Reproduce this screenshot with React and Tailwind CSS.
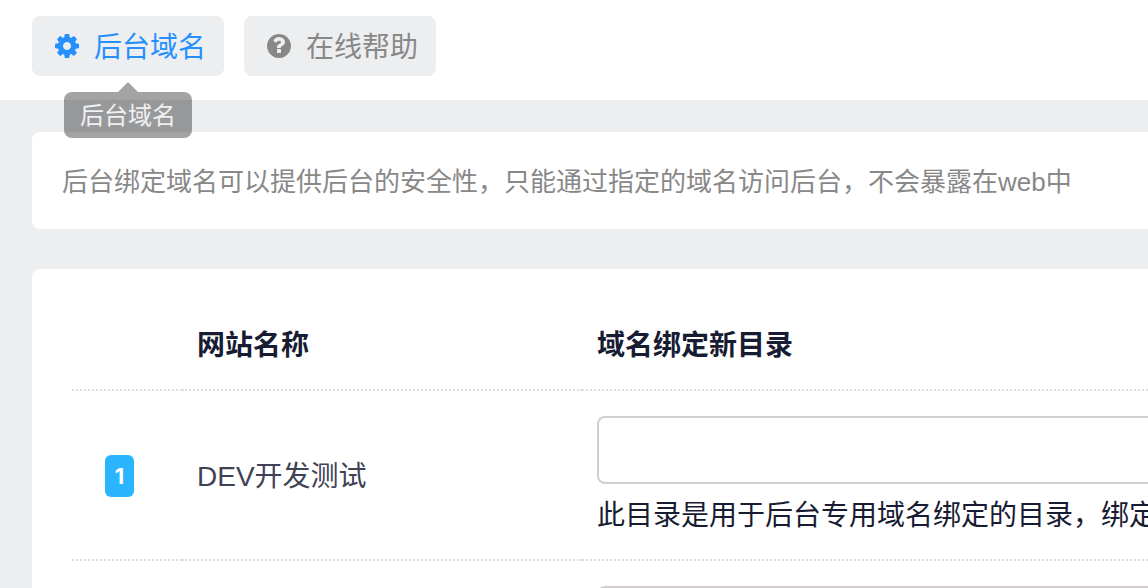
const COG =
  "M1024 640q0-106-75-181t-181-75-181 75-75 181 75 181 181 75 181-75 75-181zm512-109v222q0 12-8 23t-20 13l-185 28q-19 54-39 91 35 50 107 138 10 12 10 25t-9 23q-27 37-99 108t-94 71q-12 0-26-9l-138-108q-44 23-91 38-16 136-29 186-7 28-36 28h-222q-14 0-24.5-8.5t-11.5-21.5l-28-184q-49-16-90-37l-141 107q-10 9-25 9-14 0-25-11-126-114-165-168-7-10-7-23 0-12 8-23 15-21 51-66.5t54-70.5q-27-50-41-99l-183-27q-13-2-21-12.5t-8-23.5v-222q0-12 8-23t19-13l186-28q14-46 39-92-40-57-107-138-10-12-10-24 0-10 9-23 26-36 98.5-107.5t94.5-71.5q13 0 26 10l138 107q44-23 91-38 16-136 29-186 7-28 36-28h222q14 0 24.5 8.5t11.5 21.5l28 184q49 16 90 37l142-107q9-9 24-9 13 0 25 10 129 119 165 170 7 8 7 22 0 12-8 23-15 21-51 66.5t-54 70.5q26 50 41 98l183 28q13 2 21 12.5t8 23.5z";

const QUESTION =
  "M896 1056v-192q0-14-9-23t-23-9h-192q-14 0-23 9t-9 23v192q0 14 9 23t23 9h192q14 0 23-9t9-23zm256-672q0-88-55.5-163t-138.5-116-170-41q-243 0-371 213-15 24 8 42l132 100q7 6 19 6 16 0 25-12 53-68 86-92 34-24 86-24 48 0 85.5 26t37.5 59q0 38-20 61t-68 45q-63 28-115.5 86.5t-52.5 125.5v36q0 14 9 23t23 9h192q14 0 23-9t9-23q0-19 21.5-49.5t54.5-49.5q32-18 49-28.5t46-35 44.5-48 28-60.5 12.5-81zm384 256q0 209-103 385.5t-279.5 279.5-385.5 103-385.5-103-279.5-279.5-103-385.5 103-385.5 279.5-279.5 385.5-103 385.5 103 279.5 279.5 103 385.5z";

function Icon({ path }) {
  return (
    <svg viewBox="0 -128 1536 1536" className="size-6 shrink-0 fill-current" aria-hidden="true">
      <path d={path} />
    </svg>
  );
}

function ToolButton({ icon, label, className, describedBy }) {
  return (
    <button
      type="button"
      aria-describedby={describedBy}
      className={`flex h-[60px] items-center gap-[15px] rounded-lg bg-[#edeef0] pl-[23px] pr-[18px] text-[28px] leading-10 ${className}`}
    >
      <Icon path={icon} />
      <span className="pt-1">{label}</span>
    </button>
  );
}

function Tooltip({ id, children }) {
  return (
    <div
      id={id}
      role="tooltip"
      className="absolute left-1/2 top-full z-10 mt-[6px] flex -translate-x-1/2 flex-col items-center"
    >
      <svg viewBox="0 0 20 10" className="h-[10px] w-5 fill-black/36" aria-hidden="true">
        <path d="M0 10 L9 1 Q10 0 11 1 L20 10 Z" />
      </svg>
      <div className="whitespace-nowrap rounded-lg bg-black/36 px-4 pt-[2px] text-2xl leading-[44px] text-white/85">
        {children}
      </div>
    </div>
  );
}

function DirectoryInput(props) {
  return (
    <input
      type="text"
      className="block h-[68px] w-full rounded-l-lg border-2 border-r-0 border-[#d2cece] bg-white px-4 text-[28px] outline-none"
      {...props}
    />
  );
}

export default function App() {
  return (
    <div
      lang="zh-CN"
      className="flex h-screen flex-col overflow-hidden bg-[#edeef0] font-['Liberation_Sans','Noto_Sans_CJK_SC',sans-serif] text-[#181c32]"
    >
      <header className="flex gap-5 bg-white px-8 pb-6 pt-4">
        <div className="relative">
          <ToolButton icon={COG} label="后台域名" className="text-[#2690ff]" describedBy="domain-tip" />
          <Tooltip id="domain-tip">后台域名</Tooltip>
        </div>
        <ToolButton icon={QUESTION} label="在线帮助" className="text-[#888888]" />
      </header>

      <main className="flex flex-1 flex-col gap-10 pl-8 pt-8">
        <p className="overflow-hidden whitespace-nowrap rounded-l-lg bg-white px-[30px] pb-7 pt-8 text-[26px] leading-[37px] text-[#888888]">
          后台绑定域名可以提供后台的安全性，只能通过指定的域名访问后台，不会暴露在web中
        </p>

        <section className="flex-1 rounded-l-lg bg-white pl-10 pt-8">
          <table className="w-full table-fixed border-separate border-spacing-0 text-left text-[28px] leading-10">
            <colgroup>
              <col className="w-[110px]" />
              <col className="w-[400px]" />
              <col />
            </colgroup>
            <thead>
              <tr>
                <td className="border-b-2 border-dotted border-[#dfdfdf]" />
                <th scope="col" className="border-b-2 border-dotted border-[#dfdfdf] pb-[23px] pl-[15px] pt-[25px] font-bold">
                  网站名称
                </th>
                <th
                  scope="col"
                  id="dir-heading"
                  className="border-b-2 border-dotted border-[#dfdfdf] pb-[23px] pl-[15px] pt-[25px] font-bold"
                >
                  域名绑定新目录
                </th>
              </tr>
            </thead>
            <tbody>
              <tr>
                <td className="border-b-2 border-dotted border-[#dfdfdf] pl-[33px] pt-[2px]">
                  <span className="flex h-[42px] w-[29px] items-center justify-center rounded-md bg-[#2bb5ff] font-['Inter',sans-serif] text-[22px] font-bold text-white">
                    1
                  </span>
                </td>
                <td className="border-b-2 border-dotted border-[#dfdfdf] pl-[15px] pt-1 text-[#3f4254]">DEV开发测试</td>
                <td className="overflow-hidden whitespace-nowrap border-b-2 border-dotted border-[#dfdfdf] pb-[23px] pl-[15px] pt-[25px]">
                  <DirectoryInput aria-labelledby="dir-heading" aria-describedby="dir-hint" />
                  <p id="dir-hint" className="mt-3">
                    此目录是用于后台专用域名绑定的目录，绑定
                  </p>
                </td>
              </tr>
              <tr>
                <td />
                <td />
                <td className="pl-[15px] pt-[25px]">
                  <DirectoryInput aria-labelledby="dir-heading" />
                </td>
              </tr>
            </tbody>
          </table>
        </section>
      </main>
    </div>
  );
}
